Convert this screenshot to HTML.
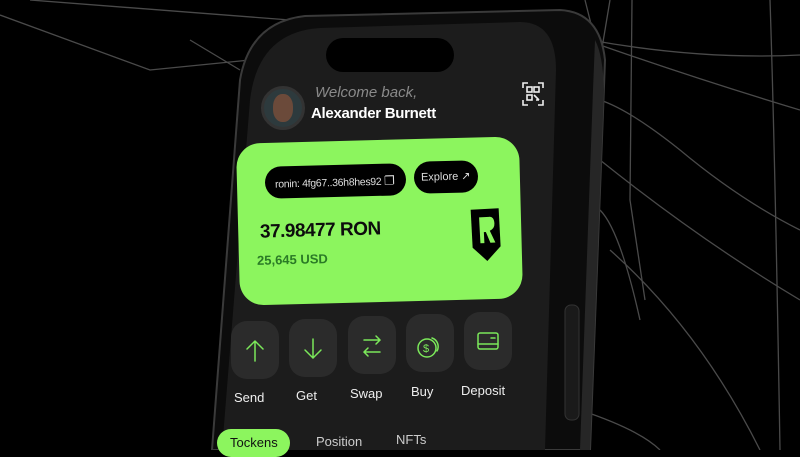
<!DOCTYPE html>
<html><head><meta charset="utf-8"><style>
*{margin:0;padding:0;box-sizing:border-box}
body{width:800px;height:450px;background:#000;overflow:hidden;position:relative;font-family:"Liberation Sans",sans-serif}
.a{position:absolute}
.t{white-space:nowrap}
.btn{position:absolute;width:48px;height:58px;background:#2b2b2b;border-radius:16px}
.lbl{position:absolute;color:#eee;font-size:13px}
</style></head><body>
<svg class="a" style="left:0;top:0" width="800" height="450">
<g fill="none" stroke="#4a4a4a" stroke-width="1.3">
<path d="M0 15 L150 70 L250 60"/><path d="M30 0 L290 20"/><path d="M190 40 L240 70"/>
<path d="M585 0 L595 40"/><path d="M610 0 L600 60"/><path d="M632 0 L630 200 L645 300"/>
<path d="M770 0 Q775 150 780 450"/><path d="M590 40 Q700 60 800 55"/>
<path d="M600 45 Q700 80 800 110"/><path d="M600 160 Q700 240 800 300"/>
<path d="M610 250 Q700 330 760 450"/><path d="M600 210 Q620 230 640 320"/>
<path d="M600 100 Q630 110 680 150 Q740 200 800 230"/><path d="M580 410 Q640 430 660 450"/>
</g>
<path d="M240 80 Q250 22 305 16 L560 10 Q600 12 605 60 L590 450 L212 450 Z" fill="#0c0c0c" stroke="#3a3a3a" stroke-width="2"/>
<path d="M595 40 Q603 55 604 90 L590 450 L580 450 L593 90 Z" fill="#262626"/>
<path d="M250 100 Q258 32 320 28 L520 22 Q556 22 556 70 L545 450 L222 450 Z" fill="#1c1c1c"/>
<rect x="565" y="305" width="14" height="115" rx="6" fill="#1a1a1a" stroke="#333"/>
</svg>
<div class="a" style="left:326px;top:38px;width:128px;height:34px;border-radius:17px;background:#000"></div>
<div class="a" style="left:261px;top:86px;width:44px;height:44px;border-radius:50%;background:#2d3a3d;border:3px solid #333;overflow:hidden"><div style="margin:5px auto;width:20px;height:28px;border-radius:45%;background:#6b4a3a"></div></div>
<div class="a t" style="left:315px;top:84px;color:#8a8a8a;font-size:15px;font-style:italic">Welcome back,</div>
<div class="a t" style="left:311px;top:105px;color:#fff;font-size:15px;font-weight:bold;letter-spacing:-.3px">Alexander Burnett</div>
<svg class="a" style="left:522px;top:82px" width="22" height="24" fill="none" stroke="#eee" stroke-width="1.6"><path d="M1 6V1h5M16 1h5v5M21 18v5h-5M6 23H1v-5"/><rect x="5" y="5" width="5" height="5"/><rect x="12" y="5" width="5" height="5"/><rect x="5" y="13" width="5" height="5"/><path d="M12 13l5 5M14 18h3"/></svg>
<div class="a" style="left:238px;top:140px;width:283px;height:162px;background:#8cf55e;border-radius:24px;transform:rotate(-1.5deg)"></div>
<div class="a t" style="left:265px;top:165px;width:141px;height:32px;border-radius:16px;background:#000;color:#ddd;font-size:10.5px;padding:10px 0 0 10px;transform:rotate(-1.5deg);letter-spacing:-.3px">ronin: 4fg67..36h8hes92 <span style="font-size:12px">❐</span></div>
<div class="a t" style="left:414px;top:161px;width:64px;height:32px;border-radius:16px;background:#000;color:#ddd;font-size:11px;padding:9px 0 0 7px;transform:rotate(-1.5deg)">Explore ↗</div>
<div class="a t" style="left:260px;top:220px;color:#0d0d0d;font-size:19px;font-weight:bold;letter-spacing:-.5px;transform:rotate(-1.5deg)">37.98477 RON</div>
<div class="a t" style="left:257px;top:252px;color:#2a7a26;font-size:13px;font-weight:bold;transform:rotate(-1.5deg)">25,645 USD</div>
<svg class="a" style="left:468px;top:207px" width="36" height="56"><path d="M4 2H32V40L18 54L4 40Z" fill="#000" transform="rotate(-3 18 28)"/><path d="M12 10H22Q27 10 27 17Q27 22 22 24L27 36H22L18 25H16V36H12Z" fill="#8cf55e" transform="rotate(-3 18 28)"/></svg>
<div class="btn" style="left:231px;top:321px"></div><div class="btn" style="left:289px;top:319px"></div><div class="btn" style="left:348px;top:316px"></div><div class="btn" style="left:406px;top:314px"></div><div class="btn" style="left:464px;top:312px"></div>
<svg class="a" style="left:0;top:0" width="800" height="450" fill="none" stroke="#7be85a" stroke-width="1.5" stroke-linecap="round">
<path d="M255 361V341M247 349l8-8 8 8"/>
<path d="M313 339V358M305 350l8 8 8-8"/>
<path d="M364 340H380M376 336l4 4-4 4M380 352H364M368 348l-4 4 4 4"/>
<circle cx="427" cy="348" r="9"/><path d="M432 338a9 9 0 0 1 5 13"/><text x="423" y="352" fill="#7be85a" stroke="none" font-size="11" font-family="Liberation Sans">$</text>
<rect x="478" y="333" width="20" height="16" rx="2"/><path d="M478 344h20M491 338h4"/>
</g></svg>
<div class="lbl" style="left:234px;top:390px">Send</div>
<div class="lbl" style="left:296px;top:388px">Get</div>
<div class="lbl" style="left:350px;top:386px">Swap</div>
<div class="lbl" style="left:411px;top:384px">Buy</div>
<div class="lbl" style="left:461px;top:383px">Deposit</div>
<div class="a t" style="left:217px;top:429px;width:73px;height:28px;border-radius:14px;background:#8cf55e;color:#111;font-size:13px;padding:6px 0 0 13px">Tockens</div>
<div class="a t" style="left:316px;top:434px;color:#ccc;font-size:13px">Position</div>
<div class="a t" style="left:396px;top:432px;color:#ccc;font-size:13px">NFTs</div>
</body></html>
